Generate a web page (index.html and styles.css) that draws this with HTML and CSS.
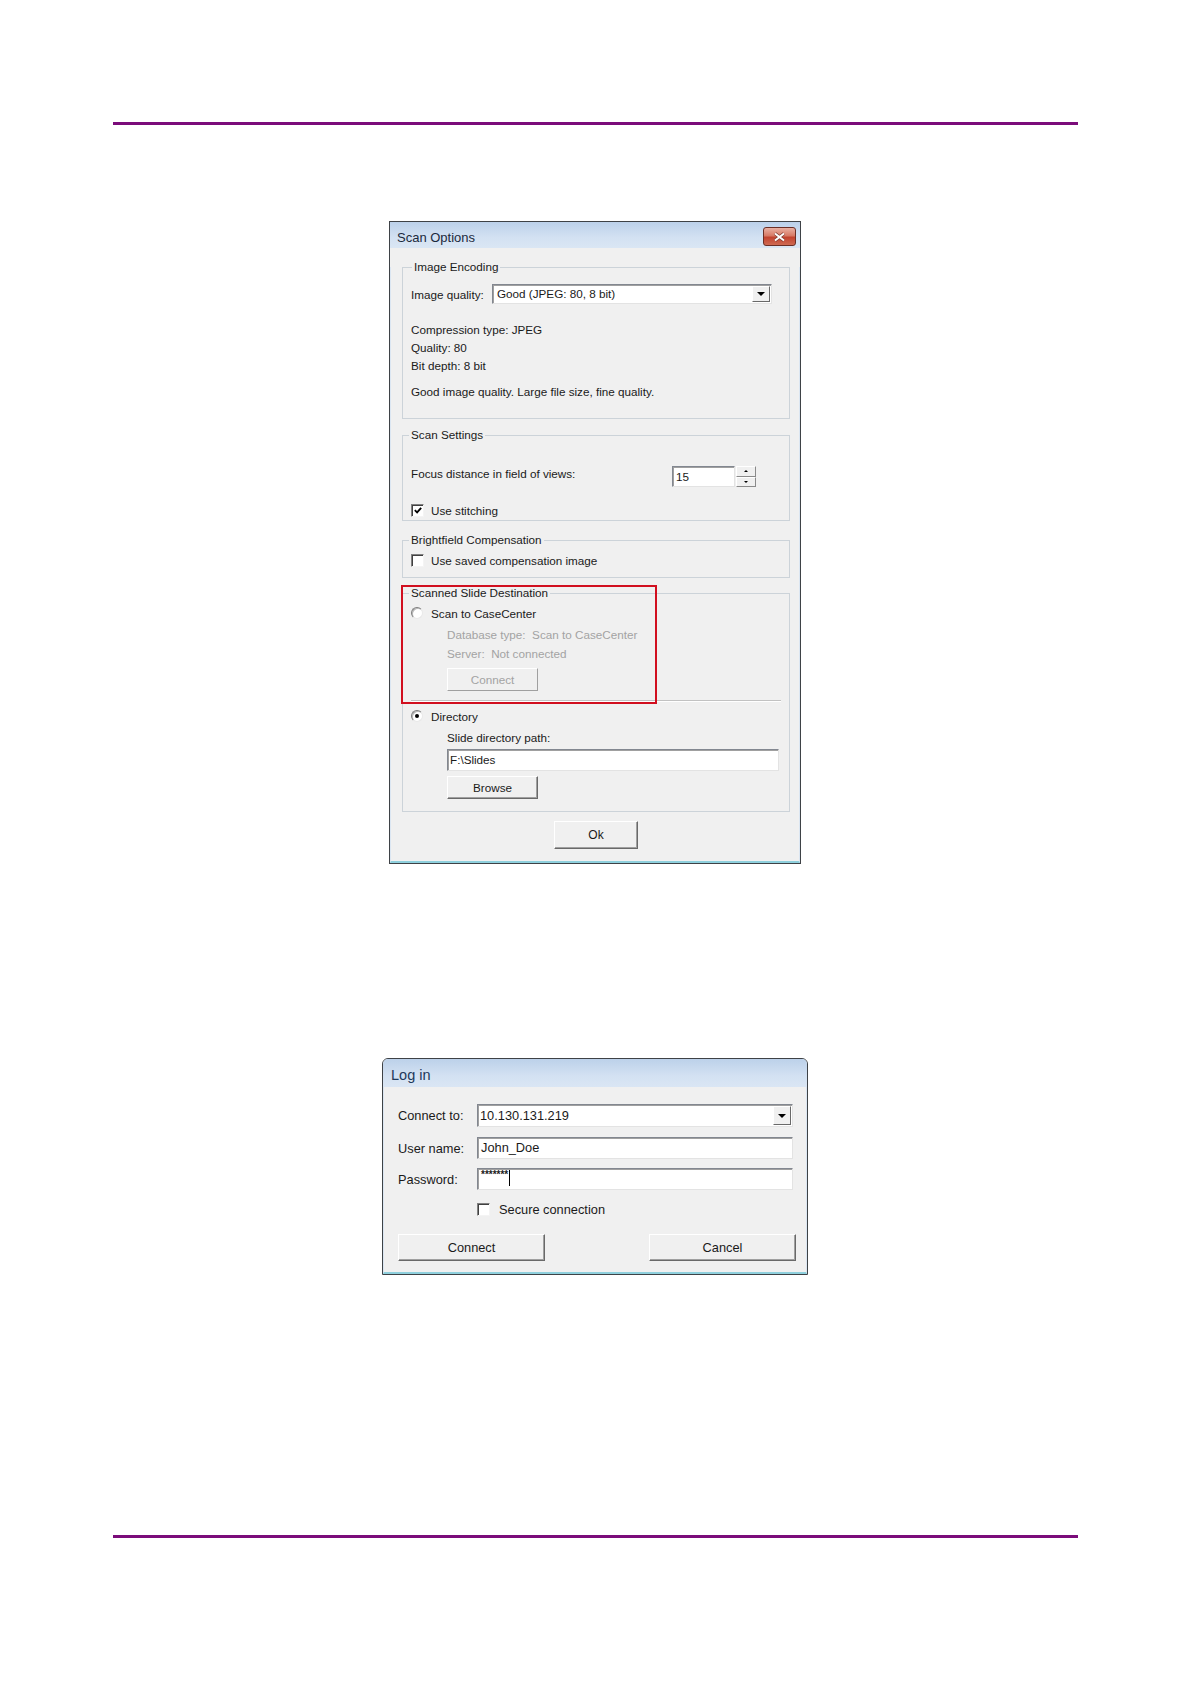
FILE: index.html
```html
<!DOCTYPE html>
<html lang="en">
<head>
    <meta charset="UTF-8">
    <title>Scan Options</title>
    <link rel="stylesheet" href="styles.css">
</head>
<body>
<div class="rule rule-top"></div>

<div class="dialog scan-dialog">
    <div class="titlebar">
        <span class="title">Scan Options</span>
        <span class="close-btn">
            <svg width="13" height="10" viewBox="0 0 13 10">
                <path d="M2 1.5 L11 8.5 M11 1.5 L2 8.5" stroke="#7a3a30" stroke-width="3.4" fill="none"/>
                <path d="M2 1.5 L11 8.5 M11 1.5 L2 8.5" stroke="#fff" stroke-width="2" fill="none"/>
            </svg>
        </span>
    </div>
    <div class="dialog-body">
        <div class="group g-encoding">
            <div class="group-title">Image Encoding</div>
            <div class="row quality-row">
                <span class="lbl-quality">Image quality:</span>
                <div class="combo combo-quality">
                    <span class="combo-text">Good (JPEG: 80, 8 bit)</span>
                    <span class="drop-btn"><i class="arrow-down"></i></span>
                </div>
            </div>
            <div class="info">
                <div>Compression type: JPEG</div>
                <div>Quality: 80</div>
                <div>Bit depth: 8 bit</div>
            </div>
            <div class="info info-desc">Good image quality. Large file size, fine quality.</div>
        </div>

        <div class="group g-settings">
            <div class="group-title">Scan Settings</div>
            <div class="row focus-row">
                <span class="lbl-focus">Focus distance in field of views:</span>
                <div class="spin">
                    <div class="field spin-input">15</div>
                    <div class="spin-btns">
                        <span class="spin-btn"><i class="arrow-up-sm"></i></span>
                        <span class="spin-btn"><i class="arrow-down-sm"></i></span>
                    </div>
                </div>
            </div>
            <div class="check-row stitch-row">
                <span class="checkbox">
                    <svg width="11" height="11" viewBox="0 0 11 11"><path d="M2 5 L4.5 7.5 L9 2.5" stroke="#000" stroke-width="2" fill="none"/></svg>
                </span>
                <span>Use stitching</span>
            </div>
        </div>

        <div class="group g-bright">
            <div class="group-title">Brightfield Compensation</div>
            <div class="check-row bright-row">
                <span class="checkbox"></span>
                <span>Use saved compensation image</span>
            </div>
        </div>

        <div class="group g-dest">
            <div class="group-title">Scanned Slide Destination</div>
            <div class="check-row radio-case">
                <span class="radio"></span>
                <span>Scan to CaseCenter</span>
            </div>
            <div class="indent disabled line db-line">Database type:&nbsp; Scan to CaseCenter</div>
            <div class="indent disabled line server-line">Server:&nbsp; Not connected</div>
            <div class="indent btn btn-small btn-disabled connect-small">Connect</div>
            <div class="separator"></div>
            <div class="check-row radio-dir">
                <span class="radio on"></span>
                <span>Directory</span>
            </div>
            <div class="indent line path-label">Slide directory path:</div>
            <div class="indent field path-input">F:\Slides</div>
            <div class="indent btn btn-small browse-btn">Browse</div>
            <div class="highlight"></div>
        </div>

        <div class="btn ok-btn">Ok</div>
    </div>
</div>

<div class="dialog login-dialog">
    <div class="titlebar">
        <span class="title">Log in</span>
    </div>
    <div class="dialog-body">
        <div class="login-row row-connect">
            <span class="login-lbl">Connect to:</span>
            <div class="combo login-field">
                <span class="combo-text">10.130.131.219</span>
                <span class="drop-btn"><i class="arrow-down"></i></span>
            </div>
        </div>
        <div class="login-row row-user">
            <span class="login-lbl">User name:</span>
            <div class="field login-field">John_Doe</div>
        </div>
        <div class="login-row row-pass">
            <span class="login-lbl">Password:</span>
            <div class="field login-field pass-field"><span class="stars">*******</span><span class="caret"></span></div>
        </div>
        <div class="check-row secure-row">
            <span class="checkbox"></span>
            <span>Secure connection</span>
        </div>
        <div class="login-btns">
            <div class="btn login-btn">Connect</div>
            <div class="btn login-btn">Cancel</div>
        </div>
    </div>
</div>

<div class="rule rule-bottom"></div>
</body>
</html>
```

FILE: styles.css
```css
*{
    margin: 0;
    padding: 0;
    box-sizing: border-box;
}
body{
    background: #fff;
    font-family: "Liberation Sans", Arial, sans-serif;
    color: #1a1a1a;
}
.rule{
    width: 965px;
    height: 3px;
    margin-left: 113px;
    background: #7b0c7a;
}
.rule-top{
    margin-top: 122px;
}
.rule-bottom{
    margin-top: 260px;
}

/* window frame */
.dialog{
    margin-left: auto;
    margin-right: auto;
    border: 1px solid #3e4246;
    background: #f0f0f0;
}
.titlebar{
    display: flex;
    align-items: flex-start;
    background: linear-gradient(#bcd1ea, #d3e1f2 60%, #dae6f4);
}
.title{
    flex: 1;
}
.dialog-body{
    border: solid #dbe6f2;
    border-width: 0 1px 2px;
    border-bottom-color: #8fd0dd;
}

/* scan options */
.scan-dialog{
    width: 412px;
    margin-top: 96px;
    font-size: 11.7px;
}
.scan-dialog .titlebar{
    height: 26px;
}
.scan-dialog .title{
    padding: 8px 0 0 7px;
    font-size: 13px;
    line-height: 16px;
    color: #1b2a3d;
}
.close-btn{
    display: flex;
    align-items: center;
    justify-content: center;
    width: 33px;
    height: 19px;
    margin: 5px 4px 0 0;
    border: 1px solid #6b2f26;
    border-radius: 3px;
    background: linear-gradient(#eab0a2, #d77a66 45%, #c2432f 55%, #cf6a52);
}
.scan-dialog .dialog-body{
    padding: 0 9px 12px 11px;
}
.group{
    position: relative;
    border: 1px solid #ccd3d9;
    padding: 0 8px;
}
.group-title{
    display: table;
    margin: -9px 0 0 -2px;
    padding: 0 2px;
    line-height: 16px;
    background: #f0f0f0;
}
.g-encoding{
    margin-top: 19px;
    padding-bottom: 17px;
}
.g-encoding .group-title{
    margin-left: 1px;
}
.g-settings{
    margin-top: 16px;
    padding-bottom: 2px;
}
.g-bright{
    margin-top: 19px;
    padding-bottom: 9px;
}
.g-dest{
    margin-top: 15px;
    padding-bottom: 12px;
}
.row{
    display: flex;
}
.quality-row{
    align-items: center;
    margin-top: 9px;
}
.lbl-quality{
    width: 81px;
}
.combo{
    display: flex;
    background: #fff;
    border: 1px solid;
    border-color: #828790 #e3e3e3 #e3e3e3 #828790;
    box-shadow: inset 1px 1px #a0a0a0;
}
.combo-text{
    flex: 1;
    padding-left: 4px;
}
.combo-quality{
    width: 280px;
    height: 20px;
    line-height: 18px;
}
.drop-btn{
    display: flex;
    align-items: center;
    justify-content: center;
    width: 18px;
    margin: 1px 1px 1px 0;
    background: #f0f0f0;
    border: 1px solid;
    border-color: #fff #696969 #696969 #fff;
}
.arrow-down{
    width: 0;
    height: 0;
    border-left: 4px solid transparent;
    border-right: 4px solid transparent;
    border-top: 4px solid #000;
}
.info{
    line-height: 18px;
    margin-top: 17px;
}
.info-desc{
    margin-top: 8px;
}
.focus-row{
    margin-top: 23px;
}
.lbl-focus{
    width: 261px;
    line-height: 16px;
}
.spin{
    display: flex;
    height: 21px;
}
.field{
    background: #fff;
    border: 1px solid;
    border-color: #828790 #e3e3e3 #e3e3e3 #828790;
    box-shadow: inset 1px 1px #a0a0a0;
    padding-left: 3px;
}
.spin-input{
    width: 63px;
    line-height: 19px;
}
.spin-btns{
    display: flex;
    flex-direction: column;
    width: 20px;
    margin-left: 1px;
}
.spin-btn{
    flex: 1;
    display: flex;
    align-items: center;
    justify-content: center;
    background: #f0f0f0;
    border: 1px solid;
    border-color: #fff #8a8a8a #8a8a8a #fff;
}
.arrow-up-sm{
    border-left: 2px solid transparent;
    border-right: 2px solid transparent;
    border-bottom: 2px solid #000;
}
.arrow-down-sm{
    border-left: 2px solid transparent;
    border-right: 2px solid transparent;
    border-top: 2px solid #000;
}
.check-row{
    display: flex;
    align-items: center;
    height: 16px;
}
.checkbox{
    display: flex;
    align-items: center;
    justify-content: center;
    width: 13px;
    height: 13px;
    margin-right: 7px;
    background: #fff;
    border: 1px solid;
    border-color: #808080 #f4f4f4 #f4f4f4 #808080;
    box-shadow: inset 1px 1px #404040;
}
.checkbox svg{
    margin: 1px 0 0 1px;
}
.stitch-row{
    margin-top: 15px;
}
.bright-row{
    margin-top: 4px;
}
.radio{
    width: 12px;
    height: 12px;
    margin-right: 8px;
    border-radius: 50%;
    border: 1px solid;
    border-color: #7d7d7d #e8e8e8 #e8e8e8 #7d7d7d;
    background: #fff;
    box-shadow: inset 1px 1px #b8b8b8;
}
.radio.on::after{
    content: '';
    display: block;
    width: 4px;
    height: 4px;
    margin: 3px;
    border-radius: 50%;
    background: #000;
}
.radio-case{
    margin-top: 4px;
}
.indent{
    margin-left: 36px;
}
.line{
    line-height: 16px;
}
.disabled{
    color: #a3a3a3;
}
.db-line{
    margin-top: 6px;
}
.server-line{
    margin-top: 3px;
}
.btn{
    text-align: center;
    background: #f0f0f0;
    border: 1px solid;
    border-color: #fff #696969 #696969 #fff;
    box-shadow: inset -1px -1px #a0a0a0;
}
.btn-small{
    width: 91px;
    height: 23px;
    line-height: 21px;
}
.btn-disabled{
    color: #a3a3a3;
    border-color: #fff #a0a0a0 #a0a0a0 #fff;
    box-shadow: none;
}
.connect-small{
    margin-top: 6px;
}
.separator{
    height: 2px;
    margin-top: 9px;
    border-top: 1px solid #c2c2c2;
    border-bottom: 1px solid #fff;
}
.radio-dir{
    margin-top: 6px;
}
.path-label{
    margin-top: 6px;
}
.path-input{
    width: 332px;
    height: 22px;
    line-height: 20px;
    margin-top: 3px;
    padding-left: 2px;
}
.browse-btn{
    margin-top: 5px;
}
.highlight{
    position: absolute;
    left: -2px;
    top: -9px;
    width: 256px;
    height: 119px;
    border: 2px solid #d10f1f;
}
.ok-btn{
    width: 84px;
    height: 28px;
    line-height: 26px;
    margin: 9px auto 0;
    font-size: 12px;
}

/* log in */
.login-dialog{
    width: 426px;
    margin-top: 194px;
    border-radius: 6px 6px 0 0;
    font-size: 12.8px;
}
.login-dialog .titlebar{
    height: 28px;
    border-radius: 5px 5px 0 0;
}
.login-dialog .title{
    padding: 7px 0 0 8px;
    font-size: 14.5px;
    line-height: 18px;
    color: #1e395b;
}
.login-dialog .dialog-body{
    padding: 17px 10px 11px 14px;
}
.login-row{
    display: flex;
    align-items: center;
}
.login-lbl{
    width: 79px;
}
.login-field{
    width: 316px;
    height: 22px;
    line-height: 20px;
}
.row-connect .login-field{
    height: 23px;
}
.row-connect .combo-text{
    padding-left: 2px;
    line-height: 21px;
}
.row-user{
    margin-top: 10px;
}
.row-pass{
    margin-top: 9px;
}
.pass-field{
    display: flex;
    align-items: flex-start;
}
.stars{
    font-size: 10px;
    line-height: 9px;
    margin-top: 1px;
    font-weight: bold;
}
.caret{
    width: 1px;
    height: 16px;
    margin: 1px 0 0 1px;
    background: #000;
}
.secure-row{
    margin: 11px 0 0 79px;
}
.secure-row .checkbox{
    margin-right: 9px;
}
.login-btns{
    display: flex;
    justify-content: space-between;
    margin-top: 17px;
}
.login-btn{
    width: 147px;
    height: 27px;
    line-height: 25px;
}
```
